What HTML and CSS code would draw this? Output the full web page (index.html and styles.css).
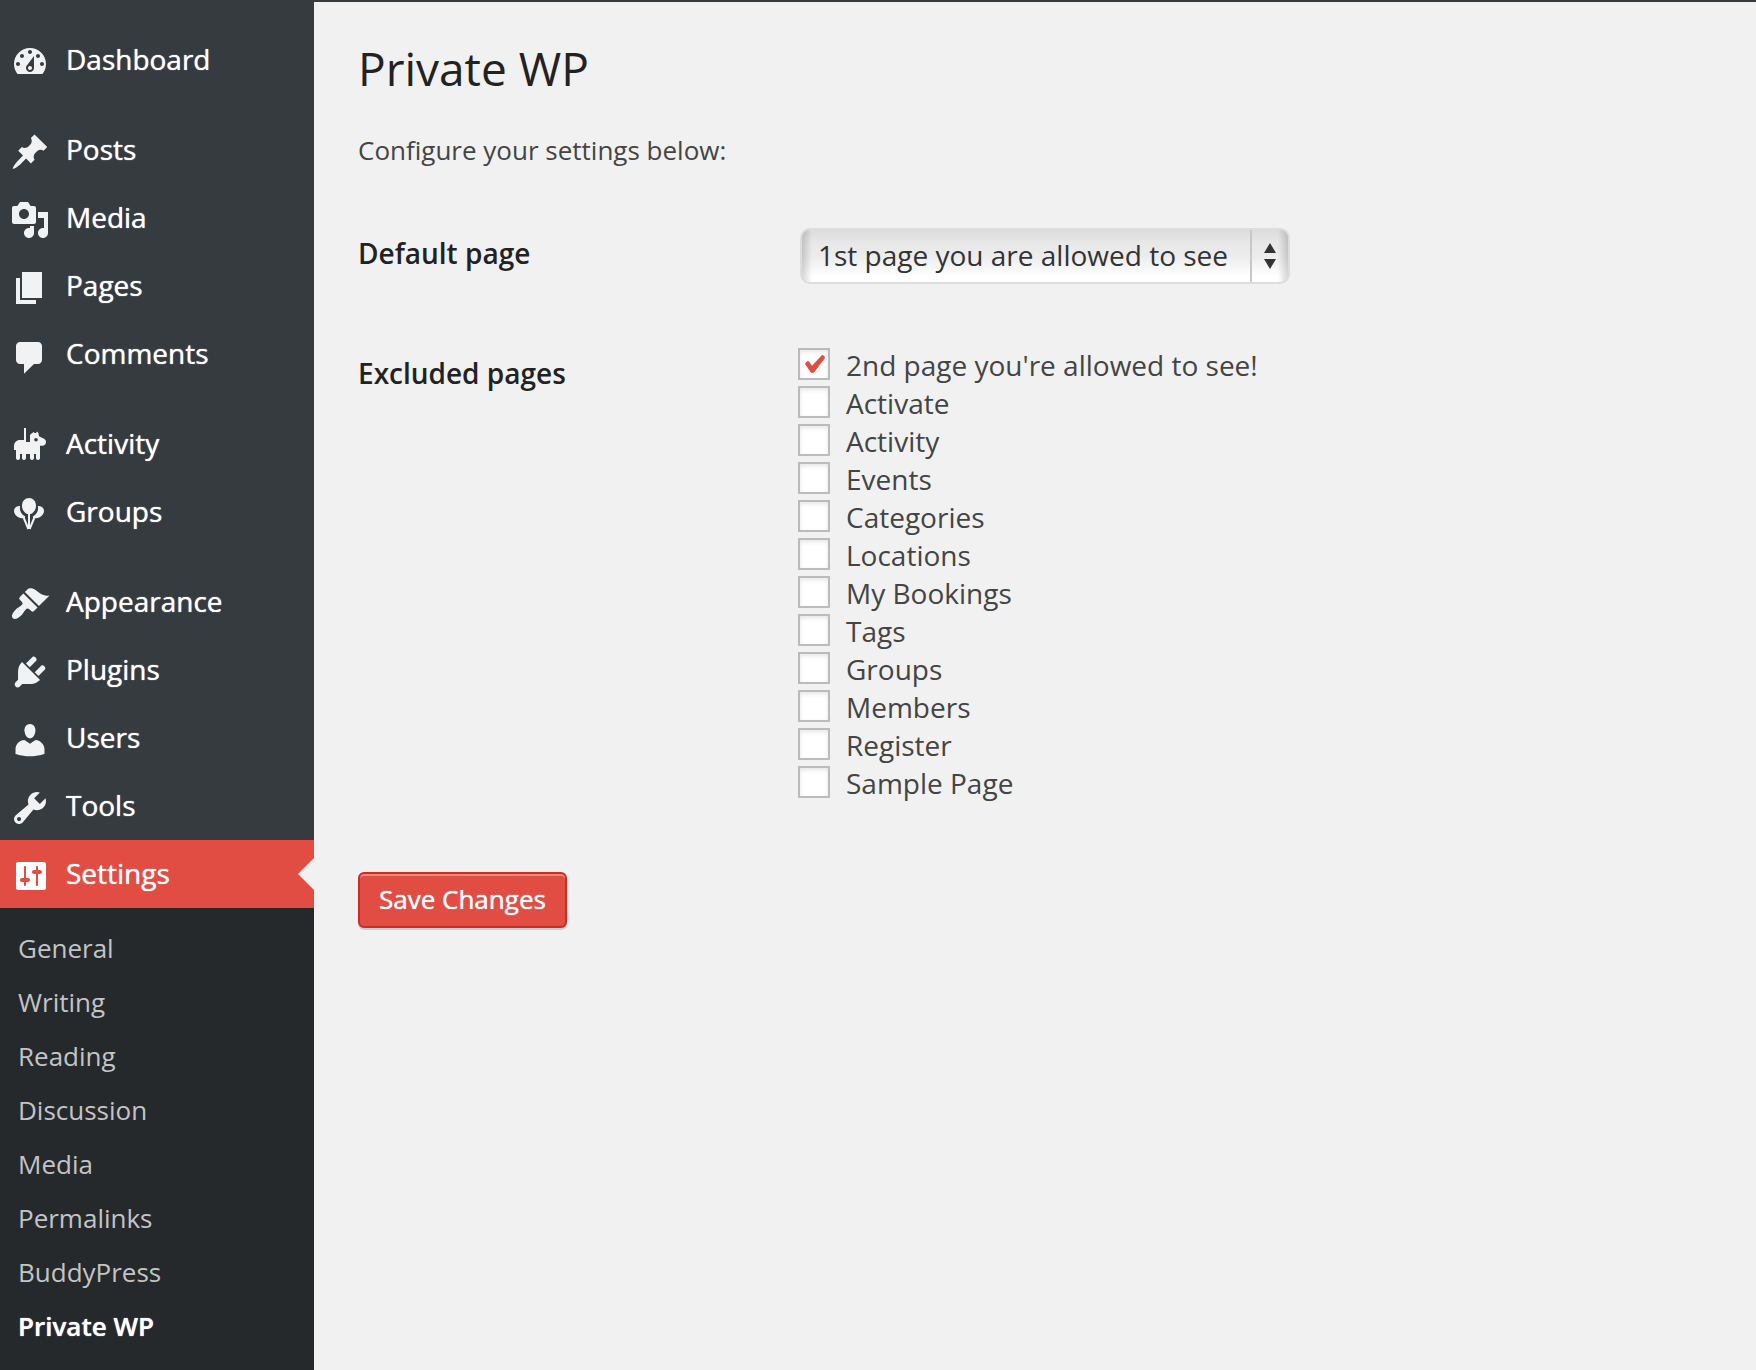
FILE: index.html
```html
<!DOCTYPE html>
<html lang="en">
<head>
<meta charset="utf-8">
<meta name="viewport" content="width=device-width, initial-scale=1">
<title>Private WP</title>
<link rel="stylesheet" href="styles.css">
</head>
<body>
<div class="admin">
  <nav class="sidebar" aria-label="Main menu">
    <ul class="menu">
      <li><a class="menu-link" href="#"><svg class="icon" viewBox="0 0 20 20" aria-hidden="true"><path d="M3.76 16h12.48c1.1-1.37 1.76-3.11 1.76-5 0-4.42-3.58-8-8-8s-8 3.58-8 8c0 1.89.66 3.63 1.76 5zM10 4c.55 0 1 .45 1 1s-.45 1-1 1-1-.45-1-1 .45-1 1-1zM6 6c.55 0 1 .45 1 1s-.45 1-1 1-1-.45-1-1 .45-1 1-1zm8 0c.55 0 1 .45 1 1s-.45 1-1 1-1-.45-1-1 .45-1 1-1zm-5.37 5.55L12 7v6c0 1.1-.9 2-2 2s-2-.9-2-2c0-.57.24-1.08.63-1.45zM4 10c.55 0 1 .45 1 1s-.45 1-1 1-1-.45-1-1 .45-1 1-1zm12 0c.55 0 1 .45 1 1s-.45 1-1 1-1-.45-1-1 .45-1 1-1zm-5 3c0-.55-.45-1-1-1s-1 .45-1 1 .45 1 1 1 1-.45 1-1z"/></svg>Dashboard</a></li>
      <li class="group-start"><a class="menu-link" href="#"><svg class="icon" viewBox="0 0 20 20" aria-hidden="true"><path d="M10.44 3.02l1.82-1.82 6.36 6.35-1.83 1.82c-1.05-.68-2.48-.57-3.41.36l-.75.75c-.92.93-1.04 2.35-.35 3.41l-1.83 1.82-2.41-2.41-2.8 2.79c-.42.42-3.38 2.71-3.8 2.29s1.86-3.39 2.28-3.81l2.79-2.79L4.1 9.36l1.83-1.82c1.05.69 2.48.57 3.4-.36l.75-.75c.93-.92 1.05-2.35.36-3.41z"/></svg>Posts</a></li>
      <li><a class="menu-link" href="#"><svg class="icon" viewBox="0 0 20 20" aria-hidden="true"><path d="M13 11V4c0-.55-.45-1-1-1h-1.67L9 1H5L3.67 3H2c-.55 0-1 .45-1 1v7c0 .55.45 1 1 1h10c.55 0 1-.45 1-1zM7 4.5c1.38 0 2.5 1.12 2.5 2.5S8.38 9.5 7 9.5 4.5 8.38 4.5 7 5.62 4.5 7 4.5zM14 6h5v10.5c0 1.38-1.12 2.5-2.5 2.5S14 17.88 14 16.5s1.12-2.5 2.5-2.5c.17 0 .34.02.5.05V9h-3V6zm-4 8.05V13h2v3.5c0 1.38-1.12 2.5-2.5 2.5S7 17.88 7 16.5 8.12 14 9.5 14c.17 0 .34.02.5.05z"/></svg>Media</a></li>
      <li><a class="menu-link" href="#"><svg class="icon" viewBox="0 0 20 20" aria-hidden="true"><path d="M6 15V2h10v13H6zm-1 1h8v2H3V5h2v11z"/></svg>Pages</a></li>
      <li><a class="menu-link" href="#"><svg class="icon" viewBox="0 0 20 20" aria-hidden="true"><path d="M5 3h9c1.1 0 2 .9 2 2v7c0 1.100-.9 2-2 2h-2l-5 4.900V14H5c-1.100 0-2-.9-2-2V5c0-1.100.9-2 2-2z"/></svg>Comments</a></li>
      <li class="group-start"><a class="menu-link" href="#"><svg class="icon" viewBox="0 0 20 20" aria-hidden="true"><path fill-rule="evenodd" d="M7 1h1v7h2V4.900c0-.6.400-1.100 1-1.300l.8-.6.5.5h.7l.5-.8.7.800.300 1.600 1.700.9c1 .2 1.800 1 1.800 2s-.8 1.900-1.800 1.900H15v6.100c0 .6-.400 1-1 1s-1-.400-1-1v-2h-1v2c0 .6-.400 1-1 1s-1-.400-1-1v-2H8v2c0 .6-.400 1-1 1s-1-.400-1-1v-2H5v2c0 .6-.400 1-1 1s-1-.400-1-1v-4H2v-2c0-1.700 1.300-3 3-3h2zm6 5a.9.9 0 1 0 0 1.800.9.9 0 1 0 0-1.800z"/></svg>Activity</a></li>
      <li><a class="menu-link" href="#"><svg class="icon" viewBox="0 0 20 20" aria-hidden="true"><path d="M9.500 2c2 0 3.500 1.600 3.500 3.900 0 1.900-1.100 3.400-2.500 4.100H8.500C7.100 9.300 6 7.800 6 5.900 6 3.600 7.500 2 9.500 2z"/><path d="M5.100 6c-.6 2 .5 4.300 2.500 5.300l-.2.900-1.400-.1C3.800 12 2 10.300 2 8.500 2 6.900 3.400 5.900 5.100 6zM13.900 6c.6 2-.5 4.300-2.500 5.300l.2.900 1.400-.1c2.200-.1 4-1.800 4-3.600 0-1.600-1.400-2.600-3.100-2.500z"/><path class="string" d="M9.500 9.500v8M6.900 12l2.300 5.500M12.100 12l-2.300 5.500"/></svg>Groups</a></li>
      <li class="group-start"><a class="menu-link" href="#"><svg class="icon" viewBox="0 0 20 20" aria-hidden="true"><path d="M14.480 11.060L7.410 3.990l1.500-1.500c.5-.56 2.300-.47 3.510.32 1.210.8 1.430 1.280 2.910 2.100 1.180.64 2.450 1.260 4.450.85zm-.71.71L6.700 4.700 4.930 6.470c-.39.39-.39 1.020 0 1.410l1.060 1.060c.39.39.39 1.030 0 1.420-.6.6-1.430 1.110-2.210 1.690-.35.26-.7.53-1.010.84C1.430 14.230.4 16.080 1.400 17.070c.99 1 2.840-.03 4.180-1.360.31-.31.58-.66.85-1.020.57-.78 1.080-1.610 1.690-2.210.39-.39 1.020-.39 1.410 0l1.060 1.060c.39.39 1.020.39 1.410 0z"/></svg>Appearance</a></li>
      <li><a class="menu-link" href="#"><svg class="icon" viewBox="0 0 20 20" aria-hidden="true"><path d="M13.110 4.360L9.870 7.600 8 5.730l3.240-3.240c.35-.34 1.050-.2 1.560.32.52.51.66 1.210.31 1.550zm-8 1.770l.91-1.120 9.010 9.010-1.190.84c-.71.71-2.630 1.160-3.820 1.160H6.140L4.900 17.260c-.59.59-1.540.59-2.120 0-.59-.58-.59-1.530 0-2.120l1.240-1.240v-3.880c0-1.130.4-3.190 1.090-3.890zm7.260 3.970l3.240-3.240c.34-.35 1.040-.21 1.550.31.52.51.66 1.210.31 1.550l-3.240 3.250z"/></svg>Plugins</a></li>
      <li><a class="menu-link" href="#"><svg class="icon" viewBox="0 0 20 20" aria-hidden="true"><path d="M10 9.250c-2.270 0-2.730-3.440-2.730-3.440C7 4.020 7.820 2 9.970 2c2.160 0 2.980 2.020 2.710 3.810 0 0-.41 3.440-2.680 3.440zm0 2.570L12.720 10c2.390 0 4.520 2.330 4.520 4.530v2.490s-3.650 1.130-7.240 1.130c-3.650 0-7.240-1.130-7.240-1.130v-2.490c0-2.250 1.940-4.480 4.470-4.480z"/></svg>Users</a></li>
      <li><a class="menu-link" href="#"><svg class="icon" viewBox="0 0 20 20" aria-hidden="true"><path d="M16.680 9.770c-1.340 1.340-3.300 1.670-4.950.99l-5.410 6.520c-.99.99-2.590.99-3.580 0s-.99-2.590 0-3.570l6.520-5.420c-.68-1.650-.35-3.610.99-4.950 1.280-1.280 3.120-1.620 4.720-1.060l-2.890 2.890 2.820 2.820 2.860-2.870c.53 1.580.18 3.390-1.080 4.650zM3.810 16.210c.4.39 1.040.39 1.430 0 .4-.4.4-1.040 0-1.430-.39-.4-1.030-.4-1.430 0-.39.39-.39 1.030 0 1.430z"/></svg>Tools</a></li>
      <li>
        <a class="menu-link current" href="#"><svg class="icon" viewBox="0 0 20 20" aria-hidden="true"><path d="M18 16V4c0-.55-.45-1-1-1H4c-.55 0-1 .45-1 1v12c0 .55.45 1 1 1h13c.55 0 1-.45 1-1zM8 11h1c.55 0 1 .45 1 1s-.45 1-1 1H8v1.500c0 .28-.22.5-.5.5s-.5-.22-.5-.5V13H6c-.55 0-1-.45-1-1s.45-1 1-1h1V5.500c0-.28.22-.5.5-.5s.5.22.5.5V11zm5-2h-1c-.55 0-1-.45-1-1s.45-1 1-1h1V5.500c0-.28.22-.5.5-.5s.5.22.5.5V7h1c.55 0 1 .45 1 1s-.45 1-1 1h-1v5.500c0 .28-.22.5-.5.5s-.5-.22-.5-.5V9z"/></svg>Settings</a>
        <ul class="submenu">
          <li><a href="#">General</a></li>
          <li><a href="#">Writing</a></li>
          <li><a href="#">Reading</a></li>
          <li><a href="#">Discussion</a></li>
          <li><a href="#">Media</a></li>
          <li><a href="#">Permalinks</a></li>
          <li><a href="#">BuddyPress</a></li>
          <li><a class="active" href="#" aria-current="page">Private WP</a></li>
        </ul>
      </li>
    </ul>
  </nav>

  <main class="content">
    <h1 class="title">Private WP</h1>
    <p class="intro">Configure your settings below:</p>
    <form>
      <div class="field">
        <label class="field-name" for="default-page">Default page</label>
        <div class="select">
          <select id="default-page">
            <option>1st page you are allowed to see</option>
          </select>
          <svg class="arrows" viewBox="0 0 12 26" aria-hidden="true"><path d="M6 0l6 10H0zM6 26l6-10H0z"/></svg>
        </div>
      </div>
      <div class="field" role="group" aria-labelledby="excluded">
        <span class="field-name" id="excluded">Excluded pages</span>
        <div class="checks">
          <label class="check"><input type="checkbox" checked>2nd page you're allowed to see!</label>
          <label class="check"><input type="checkbox">Activate</label>
          <label class="check"><input type="checkbox">Activity</label>
          <label class="check"><input type="checkbox">Events</label>
          <label class="check"><input type="checkbox">Categories</label>
          <label class="check"><input type="checkbox">Locations</label>
          <label class="check"><input type="checkbox">My Bookings</label>
          <label class="check"><input type="checkbox">Tags</label>
          <label class="check"><input type="checkbox">Groups</label>
          <label class="check"><input type="checkbox">Members</label>
          <label class="check"><input type="checkbox">Register</label>
          <label class="check"><input type="checkbox">Sample Page</label>
        </div>
      </div>
      <button class="save" type="button">Save Changes</button>
    </form>
  </main>
</div>
</body>
</html>
```
FILE: styles.css
```css
* {
  box-sizing: border-box;
}

body {
  margin: 0;
  background: #f1f1f1;
  color: #444;
  font-family: "Open Sans", "Noto Sans", sans-serif;
  font-size: 26px;
  line-height: 36px;
}

ul {
  margin: 0;
  padding: 0;
  list-style: none;
}

.admin {
  display: flex;
  min-height: 100vh;
  border-top: 2px solid #363b3f;
}

/* Sidebar */
.sidebar {
  flex: none;
  width: 314px;
  padding-top: 24px;
  background: #363b3f;
}

.group-start {
  margin-top: 22px;
}

.menu-link {
  display: flex;
  align-items: center;
  gap: 16px;
  height: 68px;
  padding: 0 0 2px 10px;
  color: #fff;
  font-size: 28px;
  line-height: 36px;
  text-decoration: none;
  text-shadow: 0 0 1px #fff;
}

.icon {
  flex: none;
  width: 40px;
  height: 40px;
  margin-top: 6px;
  fill: #f1f2f3;
}

.icon .string {
  fill: none;
  stroke: #f1f2f3;
  stroke-width: 1;
}

.current {
  position: relative;
  background: #e14d43;
}

.current .icon {
  fill: #fff;
}

.current::after {
  content: "";
  position: absolute;
  top: 18px;
  right: 0;
  border: 16px solid transparent;
  border-left: 0;
  border-right-color: #f1f1f1;
}

.submenu {
  padding: 14px 0 16px;
  background: #26292c;
}

.submenu a {
  display: block;
  padding: 8px 18px 10px;
  color: #c3c4c5;
  text-decoration: none;
}

.submenu .active {
  color: #fff;
  font-weight: 600;
  text-shadow: 0 0 1px #fff;
}

/* Settings form */
.content {
  flex: 1;
  padding: 35px 40px 40px 44px;
}

.title {
  margin: 0;
  color: #222;
  font-size: 46px;
  font-weight: 400;
  line-height: 62px;
}

.intro {
  margin: 33px 0 30px;
}

.field {
  display: grid;
  grid-template-columns: 440px 1fr;
  align-items: start;
}

.field-name {
  padding: 37px 40px 0 0;
  color: #222;
  font-size: 28px;
  font-weight: 600;
}

.select {
  position: relative;
  width: 492px;
  padding: 30px 0 34px 2px;
}

.select select {
  display: block;
  appearance: none;
  width: 100%;
  height: 56px;
  padding: 0 40px 2px 16px;
  border: 2px solid #ddd;
  border-radius: 10px;
  background:
    linear-gradient(#c8c8c8, #c8c8c8) right 36px top 0 / 2px 100% no-repeat,
    linear-gradient(to right, rgba(0, 0, 0, .16), transparent) left / 10px 100% no-repeat,
    linear-gradient(to left, rgba(0, 0, 0, .16), transparent) right / 10px 100% no-repeat,
    linear-gradient(#dcdcdc, #e8e8e8 25%, #ececec 50%, #fff 90%);
  color: #333;
  font: 28px/38px "Open Sans", "Noto Sans", sans-serif;
}

.arrows {
  position: absolute;
  top: 45px;
  right: 14px;
  width: 12px;
  height: 26px;
  fill: #333;
  pointer-events: none;
}

.checks {
  padding-top: 28px;
}

.check {
  display: flex;
  gap: 16px;
  width: fit-content;
  font-size: 28px;
  line-height: 38px;
}

.check input {
  appearance: none;
  flex: none;
  width: 32px;
  height: 32px;
  margin: 2px 0 0;
  border: 2px solid #bbb;
  background: #fff;
  box-shadow: inset 0 2px 4px rgba(0, 0, 0, .1);
}

.check input:checked::before {
  content: "";
  display: block;
  width: 20px;
  height: 18px;
  margin: 5px;
  background: #e14d43;
  clip-path: polygon(84% 2%, 89% 0, 100% 10%, 98% 20%, 47% 94%, 40% 100%, 30% 98%, 0 50%, 3% 41%, 14% 34%, 20% 36%, 35% 60%);
}

.save {
  display: block;
  height: 56px;
  margin-top: 70px;
  padding: 0 19px 2px;
  border: 2px solid #d02a21;
  border-radius: 6px;
  background: #e14d43;
  box-shadow: inset 0 2px 0 #ec8a85, 0 2px 0 rgba(0, 0, 0, .15);
  color: #fff;
  font: 26px/36px "Open Sans", "Noto Sans", sans-serif;
  text-shadow: 0 0 1px #fff;
}
```
